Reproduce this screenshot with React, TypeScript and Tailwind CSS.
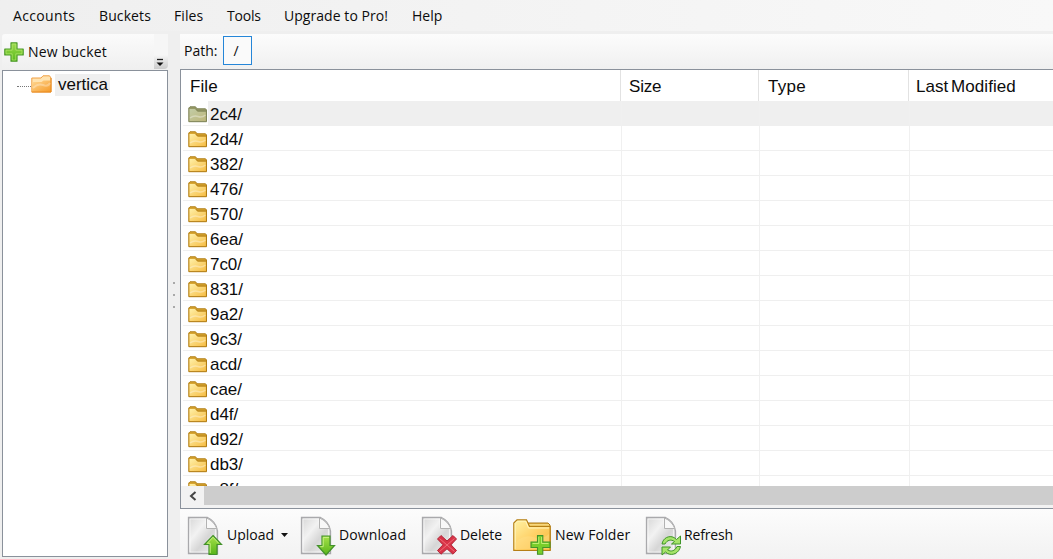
import React from "react";

function PageIcon({ children }: { children: React.ReactNode }) {
  return (
    <svg width="38" height="40" viewBox="0 0 38 40" className="shrink-0">
      <defs>
        <linearGradient id="paper" x1="0" y1="0" x2="1" y2="1">
          <stop offset="0" stopColor="#d6d6d6" />
          <stop offset="0.35" stopColor="#f2f2f2" />
          <stop offset="0.6" stopColor="#d6d6d6" />
          <stop offset="1" stopColor="#f4f4f4" />
        </linearGradient>
        <linearGradient id="green" x1="0" y1="0" x2="0" y2="1">
          <stop offset="0" stopColor="#a6e24a" />
          <stop offset="1" stopColor="#58b419" />
        </linearGradient>
      </defs>
      <path d="M1.5 1.5H20.5C25 3.5 29.500 8 30.500 15V37.5H1.5Z" fill="url(#paper)" stroke="#a9a9ac" strokeWidth="1.3" />
      <path d="M3 3H19V12H28.5V36H3Z" fill="none" stroke="#fff" strokeOpacity="0.6" />
      <path d="M19.5 2V12.500H29.800C28 8 24.500 4 19.500 2Z" fill="#f8f8f8" stroke="#b2b2b2" />
      {children}
    </svg>
  );
}

function SmallFolder({ selected = false }: { selected?: boolean }) {
  const stroke = selected ? "#7f8458" : "#b17c12";
  return (
    <svg width="20" height="17" viewBox="0 0 20 17" preserveAspectRatio="none" className="mt-[2px] shrink-0">
      <defs>
        <linearGradient id="folder" x1="0" y1="0" x2="1" y2="1">
          <stop offset="0" stopColor="#fff0a8" />
          <stop offset="1" stopColor="#f6bd45" />
        </linearGradient>
        <linearGradient id="folderSelected" x1="0" y1="0" x2="1" y2="1">
          <stop offset="0" stopColor="#c2cca6" />
          <stop offset="1" stopColor="#bdb67b" />
        </linearGradient>
      </defs>
      <path d="M.8 15.7V2L2 .8H7.500L9 2.800H17.500L18.500 4V15.700Z" fill={selected ? "#979a65" : "#d9a733"} stroke={stroke} />
      <path d="M1.500 15V3H7.500L9.500 5.500H17.800V15Z" fill={selected ? "url(#folderSelected)" : "url(#folder)"} />
      <path d="M7.500 2.800L9.500 5H18" fill="none" stroke={stroke} />
      <path d="M2 12Q6 9 10 10.500T17.500 9" fill="none" stroke="#fff" strokeOpacity="0.35" strokeWidth="1.500" />
    </svg>
  );
}

function Plus() {
  return (
    <svg width="20" height="20" viewBox="0 0 20 20" className="mb-px shrink-0">
      <defs>
        <linearGradient id="plus" x1="0" y1="0" x2="0" y2="1">
          <stop offset="0" stopColor="#9fdb4e" />
          <stop offset="1" stopColor="#58b91c" />
        </linearGradient>
      </defs>
      <path d="M7 .8H13V7H19.200V13H13V19.200H7V13H.8V7H7Z" fill="url(#plus)" stroke="#4d9a2b" strokeWidth="1.200" strokeLinejoin="round" />
      <path d="M8.200 8.200V2H11.800V8.200H18V11.800H11.800V18H8.200V11.800H2V8.200Z" fill="none" stroke="#b4e66f" strokeWidth="0.700" />
    </svg>
  );
}

function TreeFolder() {
  return (
    <svg width="21" height="18" viewBox="0 0 21 18" className="mt-px shrink-0">
      <defs>
        <linearGradient id="orange" x1="0" y1="0" x2="1" y2="1">
          <stop offset="0" stopColor="#ffd894" />
          <stop offset="1" stopColor="#f59a28" />
        </linearGradient>
      </defs>
      <path d="M.8 17V3H10L12 .8H18.500L20 3V17Z" fill="#ffe3b0" stroke="#f0a044" />
      <path d="M1 17V7H10.500L12.500 5.500H20V17Z" fill="url(#orange)" />
      <path d="M.8 17H20V3" fill="none" stroke="#e88a20" />
      <path d="M2 13Q7 8 12 10T19 8" fill="none" stroke="#fff" strokeOpacity="0.3" strokeWidth="2" />
    </svg>
  );
}

function NewFolderIcon() {
  return (
    <svg width="38" height="36" viewBox="0 0 38 36" className="mt-[2px] shrink-0">
      <defs>
        <linearGradient id="bigFolder" x1="0" y1="0" x2="1" y2="1">
          <stop offset="0" stopColor="#fff3a6" />
          <stop offset="0.500" stopColor="#ffd269" />
          <stop offset="1" stopColor="#f8b638" />
        </linearGradient>
      </defs>
      <path d="M15 4H35L37 6V31H15Z" fill="#e8b94a" stroke="#ab7814" />
      <path d="M16 5.800H36" stroke="#fbe497" />
      <path d="M.8 31.500V4L4 .8H13.500L16.500 7.500H37.200V31.500Z" fill="url(#bigFolder)" stroke="#b57f16" strokeWidth="1.200" />
      <path d="M2.200 30V4.500L4.500 2.200H12.700L15.500 9H36" fill="none" stroke="#fff5bd" />
      <path d="M2 24Q10 15 20 18T36 15V30H2Z" fill="#ffe28f" fillOpacity="0.400" />
      <path d="M24.500 16.500H29.800V23H37V28.500H29.800V35.300H24.500V28.500H18V23H24.500Z" fill="#78ce2b" stroke="#43932a" strokeWidth="1.100" />
      <path d="M25.800 18V24.500H19.500M28.600 18V24.500H35.500" fill="none" stroke="#c0ef73" />
    </svg>
  );
}

const rows = ["2c4/", "2d4/", "382/", "476/", "570/", "6ea/", "7c0/", "831/", "9a2/", "9c3/", "acd/", "cae/", "d4f/", "d92/", "db3/", "e8f/"];

export default function App() {
  return (
    <div className="flex h-[559px] w-[1053px] flex-col overflow-hidden bg-[#efefef] font-['Open_Sans','Noto_Sans',sans-serif] text-[14px] text-[#0c0c0c]">
      <nav className="flex h-[31px] shrink-0 items-center bg-linear-to-r from-[#efefef] to-[#f8f8f8] pl-[13px] whitespace-nowrap">
        <span className="w-[86px] tracking-[0.35px]">Accounts</span>
        <span className="w-[75px] tracking-[0.1px]">Buckets</span>
        <span className="w-[53px] tracking-[0.1px]">Files</span>
        <span className="w-[57px] tracking-[-0.2px]">Tools</span>
        <span className="w-[128px] tracking-[0.05px]">Upgrade to Pro!</span>
        <span>Help</span>
      </nav>
      <div className="flex min-h-0 flex-1 pt-[3px]">
        <aside className="ml-[2px] flex w-[166px] shrink-0 flex-col">
          <div className="flex h-[36px] shrink-0 items-center rounded-t-[3px] bg-linear-to-b from-[#fbfbfb] to-[#efefef] pl-[2px]">
            <Plus />
            <span className="mb-[2px] ml-[4px] w-[126px] tracking-[0.2px] whitespace-nowrap">New bucket</span>
            <span className="flex h-full w-[14px] items-end justify-center pb-px">
              <span className="flex h-full w-full items-end justify-center rounded-br-[4px] bg-linear-to-b from-[#f6f6f6] from-60% to-[#cbcbcb] pr-[2px] pb-[2px]">
                <svg width="8" height="9" viewBox="0 0 8 9"><path d="M1 1.500H7" stroke="#222" strokeWidth="1.300" /><path d="M.5 4.500H7.500L4 8Z" fill="#111" /></svg>
              </span>
            </span>
          </div>
          <div className="mb-[2px] flex flex-1 items-start border border-[#8a919b] bg-white pt-[3px] pl-[14px]">
            <span className="mt-[12px] h-px w-[14px] border-t border-dotted border-[#777]" />
            <TreeFolder />
            <span className="ml-[3px] h-[22px] w-[55px] bg-[#efefef] pl-[3px] font-['Liberation_Sans',Arial,sans-serif] text-[17px] leading-[22px]">vertica</span>
          </div>
        </aside>
        <div className="flex w-[12px] shrink-0 flex-col items-center gap-[10px] pt-[248px]">
          <span className="size-[2px] bg-[#a9a9a9]" />
          <span className="size-[2px] bg-[#a9a9a9]" />
          <span className="size-[2px] bg-[#a9a9a9]" />
        </div>
        <main className="flex min-w-0 flex-1 flex-col">
          <div className="flex h-[35px] shrink-0 items-center bg-linear-to-b from-[#fcfcfc] to-[#f0f0f0] pl-[4px]">
            <span className="mb-[2px] w-[39px]">Path:</span>
            <span className="mb-[2px] flex h-[29px] w-[29px] items-center justify-center border border-[#2586d8] bg-[#fafafa] pr-[3px]">/</span>
          </div>
          <section className="flex h-[440px] shrink-0 flex-col border-y border-l border-[#8a919b] bg-white font-['Liberation_Sans',Arial,sans-serif]">
            <header className="flex h-[31px] shrink-0 items-center text-[17px]">
              <span className="flex h-full w-[440px] items-center border-r border-[#e2e2e2] pt-[3px] pl-[9px] tracking-[0.1px]">File</span>
              <span className="flex h-full w-[138px] items-center border-r border-[#e2e2e2] pt-[3px] pl-[8px] tracking-[-0.2px]">Size</span>
              <span className="flex h-full w-[150px] items-center border-r border-[#e2e2e2] pt-[3px] pl-[9px] tracking-[0.3px]">Type</span>
              <span className="pt-[3px] pl-[7px] tracking-[0.05px] [word-spacing:-2px] whitespace-nowrap">Last Modified</span>
            </header>
            <div className="min-h-0 flex-1 overflow-hidden pl-[2px]">
              {rows.map((name, i) => (
                <div key={name} className="flex h-[25px] border-b border-[#efefef]">
                  <span className="flex w-[25px] shrink-0 items-center pl-[5px]"><SmallFolder selected={i === 0} /></span>
                  <div className={i === 0 ? "flex flex-1 bg-[#efefef]" : "flex flex-1"}>
                    <span className="flex w-[414px] items-center border-r border-[#f0f0f0] pt-[4px] pl-[2px] text-[17px] tracking-[-0.05px]">{name}</span>
                    <span className="w-[138px] border-r border-[#f0f0f0]" />
                    <span className="w-[150px] border-r border-[#f0f0f0]" />
                  </div>
                </div>
              ))}
            </div>
            <div className="flex h-[22px] shrink-0 items-start bg-[#f2f2f2]">
              <span className="flex h-[20px] w-[23px] items-center justify-center">
                <svg width="8" height="10" viewBox="0 0 8 10"><path d="M6.500 1L2 5L6.500 9" fill="none" stroke="#444" strokeWidth="2" /></svg>
              </span>
              <span className="h-[19px] flex-1 bg-[#cdcdcd]" />
            </div>
          </section>
          <footer className="flex flex-1 items-center bg-linear-to-b from-[#fcfcfc] to-[#f2f2f2] pl-[7px] whitespace-nowrap">
            <div className="flex w-[113px] items-center pt-[4px]">
              <PageIcon><path d="M26 19.500L34.500 28.500H30V38.500H22V28.500H17.500Z" fill="url(#green)" stroke="#43922b" strokeWidth="1.200" /><path d="M23.200 37V27.300H20.300L26 21.200L31.700 27.300" fill="none" stroke="#c5ef80" /></PageIcon>
              <span className="mb-[4px] ml-[2px]">Upload</span>
              <svg width="7" height="4" viewBox="0 0 7 4" className="mb-[2px] ml-[7px]"><path d="M0 0H7L3.500 4Z" fill="#111" /></svg>
            </div>
            <div className="flex w-[121px] items-center pt-[4px]">
              <PageIcon><path d="M22 20H30V29.500H34.500L26 39L17.500 29.500H22Z" fill="url(#green)" stroke="#43922b" strokeWidth="1.200" /><path d="M23.200 21.500V30.700H20.300M23.200 21.500H29" fill="none" stroke="#c5ef80" /></PageIcon>
              <span className="mb-[4px] ml-[1px] tracking-[0.1px]">Download</span>
            </div>
            <div className="flex w-[92px] items-center pt-[4px]">
              <PageIcon><path d="M16.500 23L20 19.500L26 25L32 19.500L35.500 23L30 28.800L35.500 34.500L32 38.200L26 32.800L20 38.200L16.500 34.500L22 28.800Z" fill="#d93347" stroke="#b32537" /><path d="M18.500 22.500L33.500 35.500M33.500 22.500L18.500 35.500" stroke="#ee6d79" strokeWidth="1" /></PageIcon>
              <span className="mb-[4px] ml-[1px] tracking-[-0.05px]">Delete</span>
            </div>
            <div className="flex w-[132px] items-center pt-[4px]">
              <NewFolderIcon />
              <span className="mb-[4px] ml-[4px] tracking-[0.1px]">New Folder</span>
            </div>
            <div className="flex items-center pt-[4px]">
              <PageIcon><path d="M17 28C18 22 24 19 29 21.500L31.500 23.500L35.500 20V28H26.500L29.500 25.500C26 23 22 24 20 28Z" fill="#a6e46a" stroke="#3f9529" /><path d="M35.500 30.500C34 37 28 40 22.500 37.500L20.500 36L17 39V31H25.500L22.500 34C26 36 30 35 32 30.500Z" fill="#a6e46a" stroke="#3f9529" /></PageIcon>
              <span className="mb-[4px] ml-[1px] tracking-[-0.15px]">Refresh</span>
            </div>
          </footer>
        </main>
      </div>
    </div>
  );
}
